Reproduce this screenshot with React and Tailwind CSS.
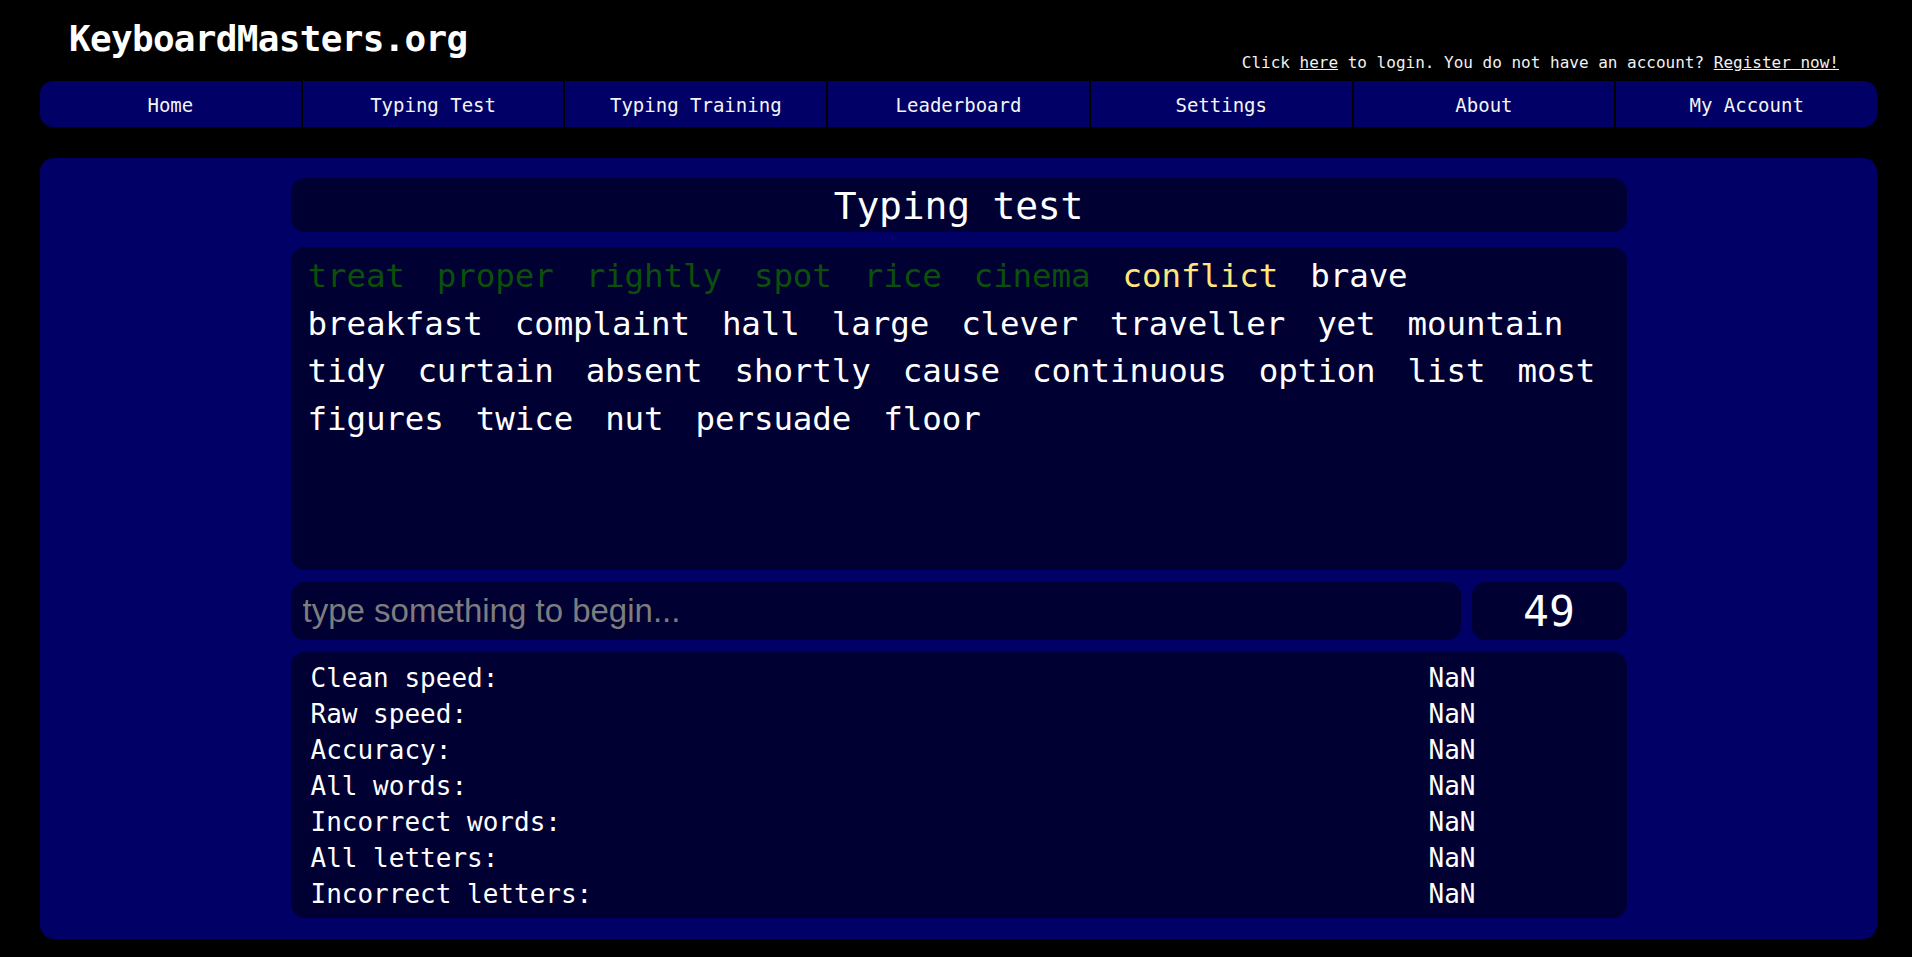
import React from "react";

const NAV = ["Home", "Typing Test", "Typing Training", "Leaderboard", "Settings", "About", "My Account"];

const LINES = [
  [
    ["treat", "g"], ["proper", "g"], ["rightly", "g"], ["spot", "g"], ["rice", "g"], ["cinema", "g"], ["conflict", "y"], ["brave", "w"],
  ],
  [
    ["breakfast", "w"], ["complaint", "w"], ["hall", "w"], ["large", "w"], ["clever", "w"], ["traveller", "w"], ["yet", "w"], ["mountain", "w"],
  ],
  [
    ["tidy", "w"], ["curtain", "w"], ["absent", "w"], ["shortly", "w"], ["cause", "w"], ["continuous", "w"], ["option", "w"], ["list", "w"], ["most", "w"],
  ],
  [
    ["figures", "w"], ["twice", "w"], ["nut", "w"], ["persuade", "w"], ["floor", "w"],
  ],
];

const STATS = [
  "Clean speed:",
  "Raw speed:",
  "Accuracy:",
  "All words:",
  "Incorrect words:",
  "All letters:",
  "Incorrect letters:",
];

function wordClass(c) {
  if (c === "g") return "text-[#0b4f0b]";
  if (c === "y") return "text-[#ffe57a]";
  return "text-white";
}

export default function App() {
  return (
    <div className="min-h-screen w-full bg-black pb-[18px] pl-[40px] pr-[35px] font-['DejaVu_Sans_Mono','Liberation_Mono',monospace] text-white">
      <header className="relative h-[81px]">
        <div className="absolute left-[29px] top-[18px] text-[36px] font-bold leading-[42px] tracking-[-0.7px] text-white">
          KeyboardMasters.org
        </div>
        <div className="absolute right-[38px] top-[52px] text-[16px] leading-[22px] text-[#f2f2f2]">
          Click <span className="underline">here</span> to login. You do not have an account?{" "}
          <span className="underline">Register now!</span>
        </div>
      </header>

      <nav className="grid h-[46px] grid-cols-7 gap-[2px] overflow-hidden rounded-[13px] bg-black">
        {NAV.map((n) => (
          <div
            key={n}
            className="flex items-center justify-center bg-[#000066] pt-[2px] text-[19px] text-[#f4f4f4]"
          >
            {n}
          </div>
        ))}
      </nav>

      <main className="mt-[31px] rounded-[14px] bg-[#000066] pb-[21px] pt-[20px]">
        <div className="mx-auto flex w-[1336px] flex-col">
          <div className="flex h-[54px] items-center justify-center rounded-[14px] bg-[#000033] pt-[3px] text-[38px] tracking-[-0.2px]">
            Typing test
          </div>

          <div className="mt-[15px] h-[323px] rounded-[14px] bg-[#000033] pl-[17px] pr-[17px] pt-[6px] text-[32.5px] leading-[47.5px] tracking-[-0.1px]">
            {LINES.map((line, i) => (
              <div key={i} className="flex gap-x-[32px] whitespace-nowrap">
                {line.map(([w, c], j) => (
                  <span key={j} className={wordClass(c)}>
                    {w}
                  </span>
                ))}
              </div>
            ))}
          </div>

          <div className="mt-[12px] flex h-[58px] gap-[11px]">
            <div className="flex flex-1 items-center rounded-[14px] bg-[#000033] pl-[12px]">
              <input
                type="text"
                placeholder="type something to begin..."
                className="w-full bg-transparent font-['Liberation_Sans',Arial,sans-serif] text-[33px] text-white outline-none placeholder:text-[#7d7d7d]"
              />
            </div>
            <div className="flex w-[155px] items-center justify-center rounded-[14px] bg-[#000033] text-[43px] leading-none">
              49
            </div>
          </div>

          <div className="mt-[12px] h-[266px] rounded-[14px] bg-[#000033] pl-[20px] pt-[8px] text-[26px] leading-[36px]">
            {STATS.map((s) => (
              <div key={s} className="flex">
                <div className="w-[1118px]">{s}</div>
                <div>NaN</div>
              </div>
            ))}
          </div>
        </div>
      </main>
    </div>
  );
}
